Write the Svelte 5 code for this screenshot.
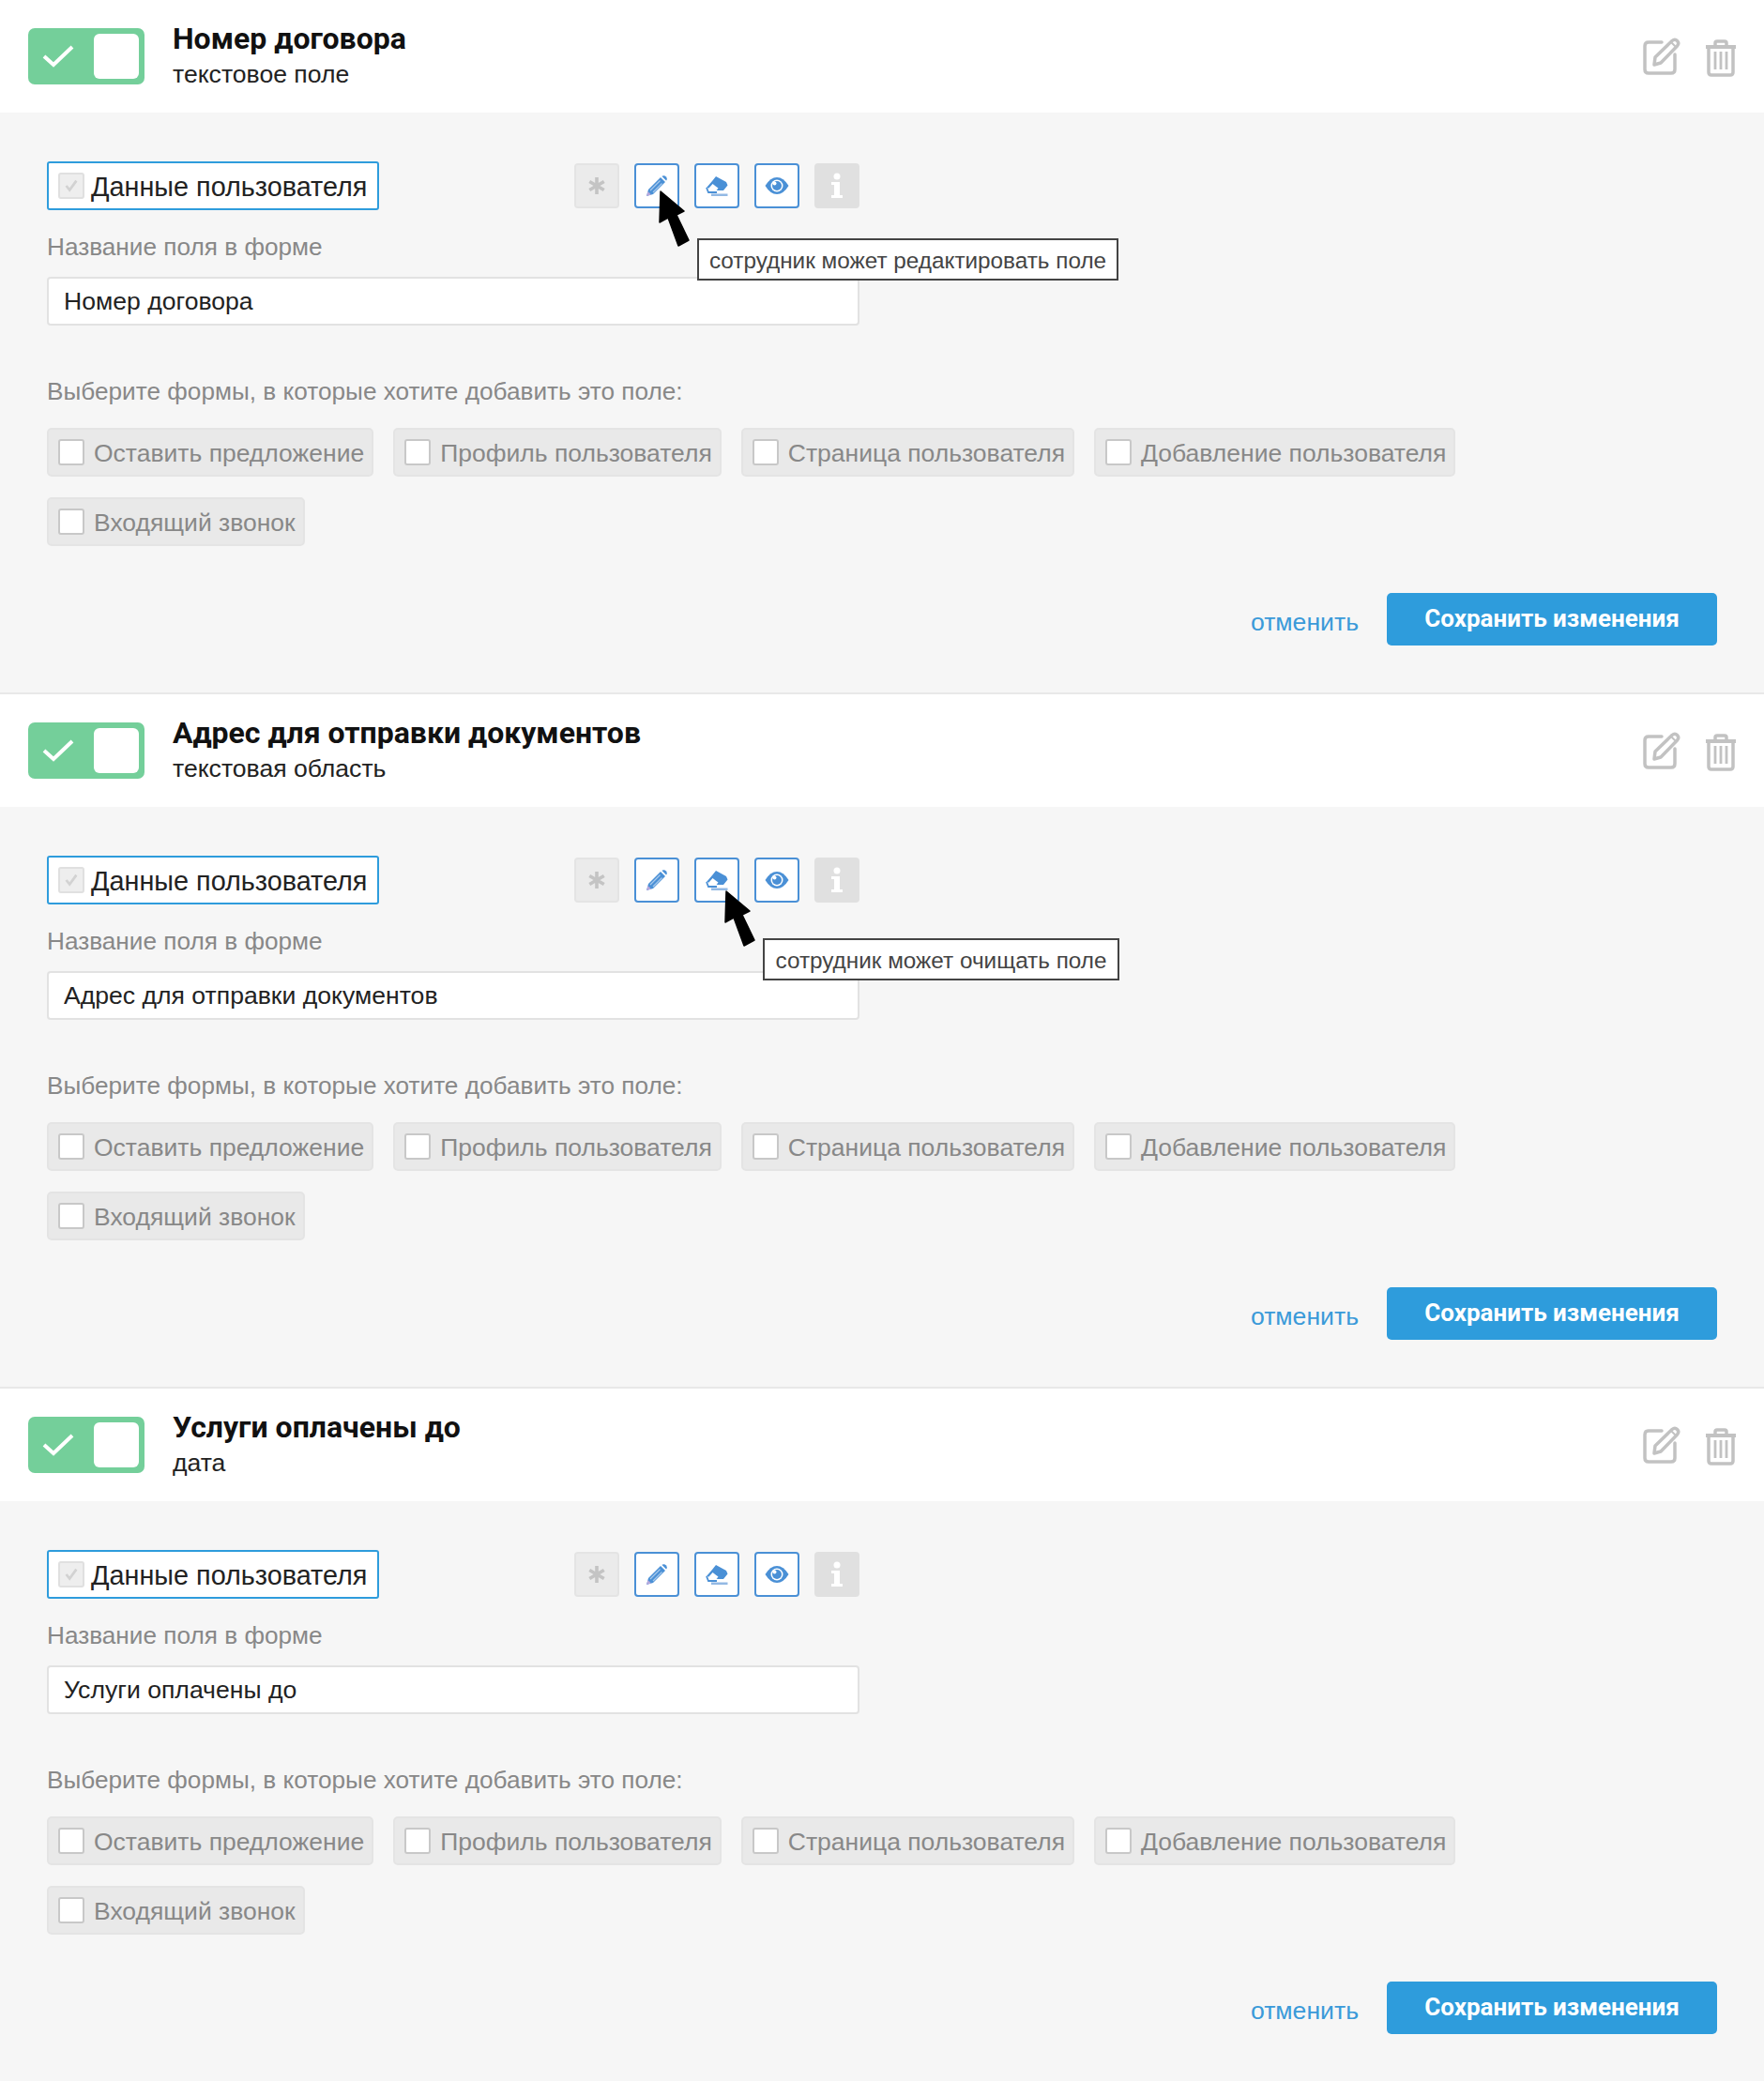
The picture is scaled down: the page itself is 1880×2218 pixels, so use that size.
<script>
  const sections = [
    { title: 'Номер договора', type: 'текстовое поле', tip: 'сотрудник может редактировать поле', tipClass: 'tip-edit', arrowClass: 'arrow-edit' },
    { title: 'Адрес для отправки документов', type: 'текстовая область', tip: 'сотрудник может очищать поле', tipClass: 'tip-clear', arrowClass: 'arrow-clear' },
    { title: 'Услуги оплачены до', type: 'дата', tip: '', tipClass: '', arrowClass: '' }
  ];
  const forms = ['Оставить предложение', 'Профиль пользователя', 'Страница пользователя', 'Добавление пользователя', 'Входящий звонок'];
</script>

<div class="page">
  {#each sections as s}
    <section class="section">
      <header class="head">
        <div class="toggle">
          <svg class="toggle-check" viewBox="0 0 34 26" width="34" height="26"><path d="M2 13 L12 22 L32 3" fill="none" stroke="#fff" stroke-width="4"/></svg>
          <span class="thumb"></span>
        </div>
        <div class="titles">
          <h2>{s.title}</h2>
          <p>{s.type}</p>
        </div>
        <div class="head-actions">
          <svg width="40" height="40" viewBox="0 0 40 40" fill="none" stroke="#c2c2c2" stroke-width="3.500">
            <path d="M20 5 H6 Q2 5 2 9 V34 Q2 38 6 38 H30 Q34 38 34 34 V18" stroke-linecap="round"/>
            <path d="M12 29 L13 21 L31 3.500 Q34 1 36.500 3.500 Q39 6 36.500 9 L19 27 Z" stroke-linejoin="round"/>
            <path d="M30 5 L35 10" stroke-width="2"/>
          </svg>
          <svg class="trash" width="34" height="40" viewBox="0 0 34 40" fill="none" stroke="#c2c2c2" stroke-width="3.500">
            <path d="M1 8 H33" stroke-width="4"/>
            <path d="M11 7 V4 Q11 2 13 2 H21 Q23 2 23 4 V7"/>
            <path d="M4 9 V35 Q4 38 7 38 H27 Q30 38 30 35 V9"/>
            <path d="M11 13 V32 M17 13 V32 M23 13 V32" stroke-width="2.800"/>
          </svg>
        </div>
      </header>

      <div class="panel">
        <div class="top-row">
          <div class="user-data">
            <span class="box checked">
              <svg viewBox="0 0 20 20" width="18" height="18"><path d="M4 10 L8 15 L16 4" fill="none" stroke="#d2d2d2" stroke-width="3"/></svg>
            </span>
            <span class="nudged">Данные пользователя</span>
          </div>
          <div class="tools">
            <span class="tool tool-star">
              <svg width="20" height="20" viewBox="0 0 22 22" stroke="#c4c4c4" stroke-width="4"><path d="M11 1 V21 M2.500 6 L19.500 16 M19.500 6 L2.500 16"/></svg>
            </span>
            <span class="tool tool-on">
              <svg width="24" height="24" viewBox="0 0 24 24">
                <path d="M1 23 L3 16 L16 3 L21 8 L8 21 Z" fill="#4a90d6"/>
                <path d="M5 17 L15.500 6.500 M8 19 L17.500 9.500" stroke="#a9c9ec" stroke-width="1.300"/>
                <path d="M1 23 L2.500 18 L6 21.500 Z" fill="#b8a8dc"/>
                <path d="M18 1.500 Q20 0.500 22 2.500 Q23.500 4.500 22.500 6 L22 6.500 L17.500 2 Z" fill="#4a90d6"/>
              </svg>
            </span>
            <span class="tool tool-on">
              <svg width="24" height="22" viewBox="0 0 24 22">
                <path d="M1 13 L7 6 L11 1 L22 7 L23.500 10.500 L19 16 L13 16 Z" fill="#4a90d6"/>
                <path d="M3.500 13.500 L7.500 9 L13.500 13.500 L11 16.500 L5.500 16.500 Z" fill="#fff"/>
                <path d="M1 13 L3 18 H12" fill="none" stroke="#4a90d6" stroke-width="1.800"/>
                <path d="M6 19.500 H23.500 V22 H6 Z" fill="#93b9e4"/>
              </svg>
            </span>
            <span class="tool tool-on">
              <svg width="26" height="20" viewBox="0 0 26 20"><path d="M0.500 10 Q6 1 13 1 Q20 1 25.500 10 Q20 19 13 19 Q6 19 0.500 10 Z" fill="#4a90d6"/><circle cx="13" cy="10" r="6.500" fill="#fff"/><circle cx="13" cy="10" r="5" fill="#4a90d6"/><circle cx="10.500" cy="7.500" r="2" fill="#fff"/></svg>
            </span>
            <span class="tool tool-info">
              <svg width="14" height="28" viewBox="0 0 14 28" fill="#fff"><circle cx="7" cy="4" r="3.500"/><path d="M1 10 H10 V24 H13 V27 H1 V24 H4 V13 H1 Z"/></svg>
            </span>
          </div>
        </div>

        <label class="muted label-name" for="name-{s.title}">Название поля в форме</label>
        <input id="name-{s.title}" class="name-input" value={s.title} />

        <p class="muted label-forms">Выберите формы, в которые хотите добавить это поле:</p>
        <div class="chips">
          {#each forms as f}
            <div class="chip"><span class="box"></span><span class="nudged">{f}</span></div>
          {/each}
        </div>

        <div class="actions">
          <a class="cancel" href="#top">отменить</a>
          <button class="save">Сохранить изменения</button>
        </div>

        {#if s.tip}
          <svg class="arrow {s.arrowClass}" width="34" height="62" viewBox="0 0 34 62"><path d="M2 1 L27 22 L19 26 L32 53 L21 59 L10 29 L1 34 Z" fill="#000" stroke="#000" stroke-width="1.500" stroke-linejoin="round"/></svg>
          <div class="tip {s.tipClass}">{s.tip}</div>
        {/if}
      </div>
    </section>
  {/each}
</div>

<style>
  :global(body) { margin: 0; background: #f6f6f6; }
  .page { font-family: "Liberation Sans", Arial, sans-serif; color: #111; }
  .head { height: 120px; box-sizing: border-box; background: #fff; display: flex; align-items: center; padding: 0 29px 0 30px; }
  .toggle { width: 124px; height: 60px; box-sizing: border-box; background: #74cf9a; border-radius: 7px; display: flex; align-items: center; justify-content: space-between; padding: 0 6px 0 15px; flex: none; }
  .thumb { width: 48px; height: 48px; background: #fff; border-radius: 6px; }
  .titles { margin-left: 30px; flex: 1; position: relative; top: -1px; }
  h2 { margin: 0; font-family: Roboto, sans-serif; font-size: 32px; line-height: 40px; font-weight: 700; color: #111; }
  .titles p { margin: 0; font-size: 26.6px; line-height: 36px; color: #222; }
  .head-actions { display: flex; align-items: center; gap: 26px; }
  .trash { margin-top: 3px; }
  .panel { position: relative; box-sizing: border-box; background: #f6f6f6; padding: 52px 50px 50px; border-bottom: 2px solid #e8e8e8; }
  .section:last-child .panel { border-bottom: 0; }
  .top-row { display: flex; align-items: center; width: 866px; justify-content: space-between; }
  .user-data { width: 354px; height: 52px; box-sizing: border-box; background: #fff; border: 2px solid #2e9cdc; border-radius: 3px; display: flex; align-items: center; gap: 7px; padding-left: 10px; font-size: 28.8px; color: #222; }
  .nudged { padding-top: 2px; }
  .box { width: 28px; height: 28px; box-sizing: border-box; background: #fff; border: 2px solid #c8c8c8; border-radius: 3px; flex: none; display: flex; align-items: center; justify-content: center; }
  .box.checked { background: #eee; border-color: #e0e0e0; }
  .tools { display: flex; gap: 16px; }
  .tool { width: 48px; height: 48px; box-sizing: border-box; border-radius: 4px; display: flex; align-items: center; justify-content: center; }
  .tool-star { background: #ebebeb; border: 2px solid #e4e4e4; }
  .tool-on { background: #fff; border: 2px solid #4a90d6; }
  .tool-info { background: #e0e0e0; }
  .muted { display: block; color: #888; font-size: 26.2px; line-height: 30px; margin: 0; }
  .label-name { margin-top: 24px; }
  .name-input { display: block; margin-top: 17px; width: 866px; height: 52px; box-sizing: border-box; padding: 0 16px; background: #fff; border: 2px solid #e2e2e2; border-radius: 4px; font: 26.6px "Liberation Sans", Arial, sans-serif; color: #222; outline: none; }
  .label-forms { margin-top: 55px; }
  .chips { margin-top: 24px; display: flex; flex-wrap: wrap; gap: 22px 21px; width: 1780px; }
  .chip { height: 52px; box-sizing: border-box; background: #e9e9e9; border: 2px solid #e4e4e4; border-radius: 5px; display: flex; align-items: center; gap: 10px; padding: 0 8px 0 10px; color: #888; font-size: 26.5px; }
  .actions { margin-top: 50px; display: flex; justify-content: flex-end; align-items: center; gap: 30px; }
  .cancel { color: #3a9ad9; font-size: 26.6px; text-decoration: none; position: relative; top: 3px; }
  .save { width: 352px; height: 56px; background: #2e9cdc; border: 0; border-radius: 5px; color: #fff; font: 700 26px Roboto, sans-serif; padding: 0 0 2px; }
  .arrow { position: absolute; }
  .arrow-edit { left: 702px; top: 83px; }
  .arrow-clear { left: 772px; top: 89px; }
  .tip { position: absolute; box-sizing: border-box; height: 45px; background: #fff; border: 2px solid #444; color: #444; font-size: 24.3px; line-height: 43px; text-align: center; white-space: nowrap; }
  .tip-edit { left: 743px; top: 134px; width: 449px; }
  .tip-clear { left: 813px; top: 140px; width: 380px; }
</style>
